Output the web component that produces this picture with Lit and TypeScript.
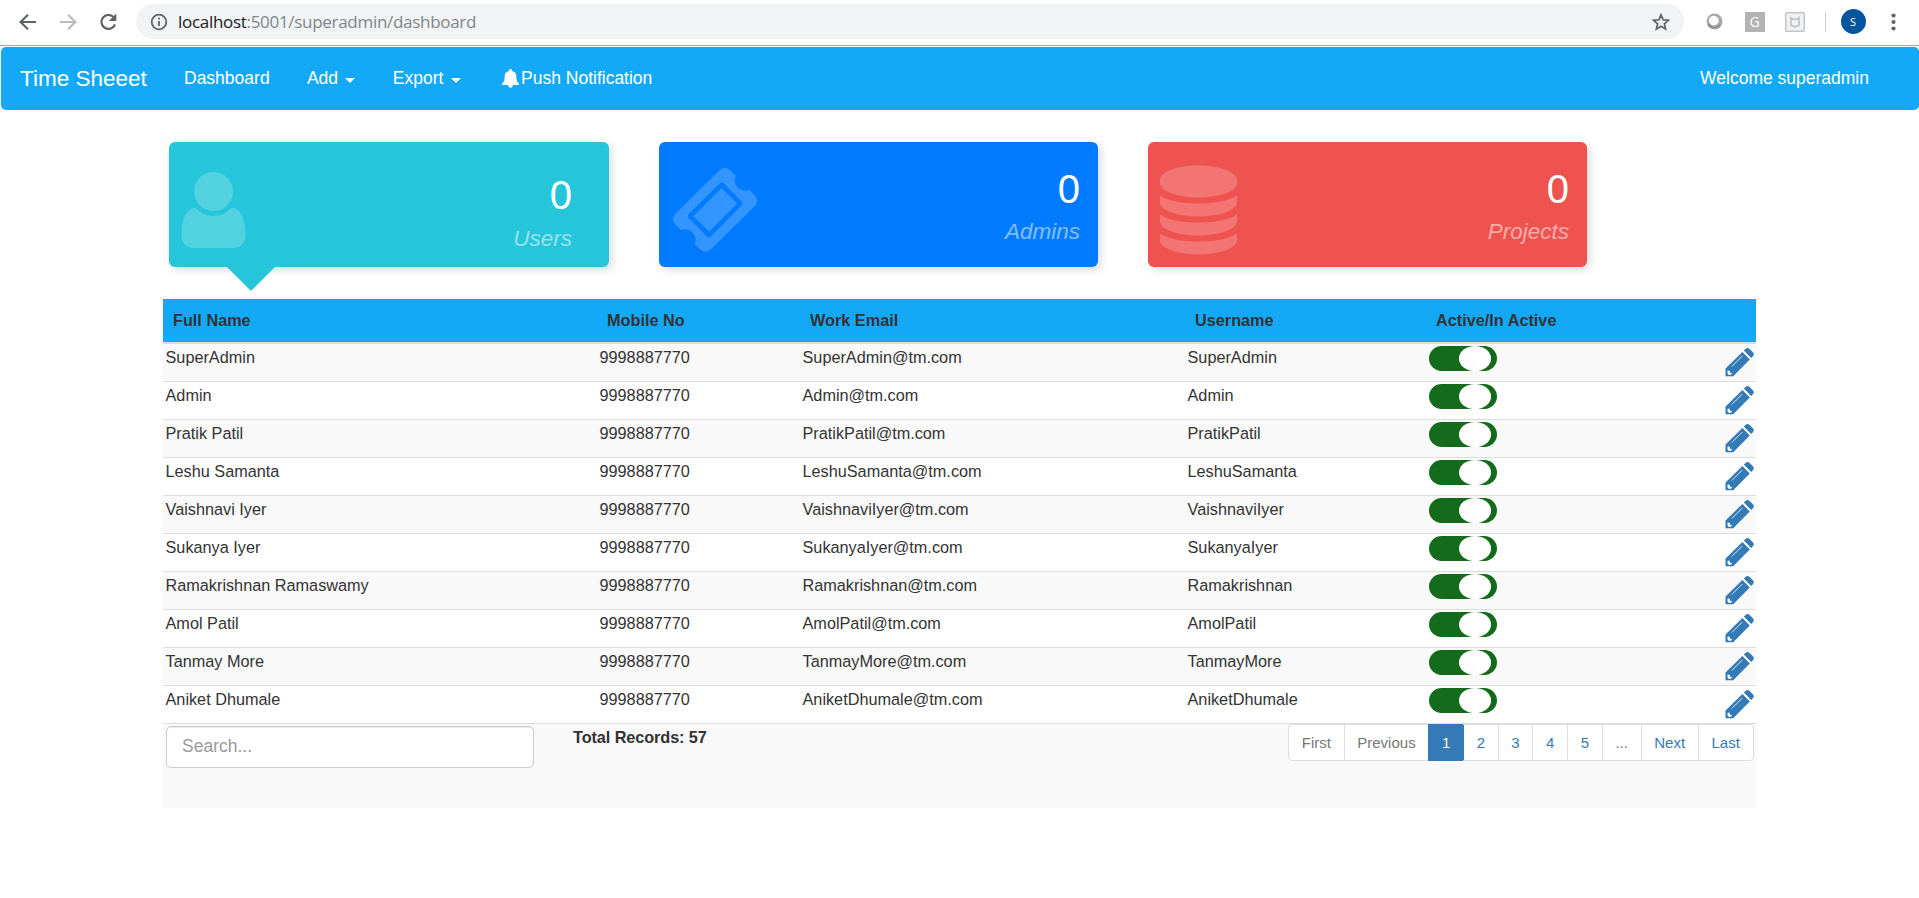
import { LitElement, html, css } from "lit";
import { customElement } from "lit/decorators.js";

const sans = css`"Liberation Sans", Arial, sans-serif`;

@customElement("browser-bar")
class BrowserBar extends LitElement {
  static styles = css`
    :host { display: flex; align-items: center; box-sizing: border-box; height: 46px; padding: 0 23.500px 2px 17px; background: #fff; border-bottom: 1px solid #a8a8a8; }
    svg { display: block; flex: none; }
    .back { margin-right: 20px; }
    .fwd { margin-right: 20px; }
    .reload { margin-right: 17px; }
    .address { display: flex; flex: 1; align-items: center; height: 35px; box-sizing: border-box; border-radius: 18px; background: #f1f3f4; padding: 0 14px; }
    .url { flex: 1; margin-left: 10px; font: 17px/35px "Open Sans", sans-serif; letter-spacing: -0.3px; color: #80868b; white-space: nowrap; }
    .host { color: #202124; }
    .ext { display: flex; align-items: center; margin-left: 22px; }
    .g { width: 20px; height: 20px; margin-left: 22px; background: #b3b3b3; color: #fff; font: 14px/19px "Open Sans", sans-serif; text-align: center; }
    .shield { margin-left: 20px; }
    .sep { width: 1px; height: 20px; margin-left: 20px; background: #c8cacc; }
    .avatar { width: 25px; height: 25px; margin-left: 15px; border-radius: 50%; background: #03559e; color: #fff; font: 11px/25px "Open Sans", sans-serif; text-align: center; }
    .more { margin-left: 25px; }
  `;
  render() {
    return html`
      <svg class="back" width="21" height="20" viewBox="0 0 21 20" fill="none" stroke="#5f6368" stroke-width="2.1"><path d="M19 10H4M11 2.7 3.5 10 11 17.3"/></svg>
      <svg class="fwd" width="21" height="20" viewBox="0 0 21 20" fill="none" stroke="#b9bbbe" stroke-width="2.1"><path d="M2 10H17M10 2.7 17.5 10 10 17.3"/></svg>
      <svg class="reload" width="20" height="20" viewBox="0 0 20 20"><path d="M16 12.300A7 7 0 1 1 14.500 5" fill="none" stroke="#5f6368" stroke-width="2.2"/><path d="M17.300 1.500V9h-7.500z" fill="#5f6368"/></svg>
      <div class="address">
        <svg width="18" height="18" viewBox="0 0 18 18"><circle cx="9" cy="9" r="7.3" fill="none" stroke="#5f6368" stroke-width="1.8"/><path d="M8.1 8h1.8v5H8.1zM8.1 4.8h1.8v1.8H8.1z" fill="#5f6368"/></svg>
        <div class="url"><span class="host">localhost</span>:5001/superadmin/dashboard</div>
        <svg width="18" height="18" viewBox="0 0 18 18"><path d="m9 1.8 2.1 5 5.3.5-4 3.5 1.2 5.3L9 13.3l-4.6 2.8 1.2-5.3-4-3.5 5.3-.5z" fill="none" stroke="#5f6368" stroke-width="1.7"/></svg>
      </div>
      <div class="ext">
        <svg width="17" height="17" viewBox="0 0 17 17"><circle cx="8.5" cy="8.5" r="8" fill="#a9a9a9"/><circle cx="7.8" cy="7.6" r="4.9" fill="#fafafa"/><path d="M2.5 11A7 7 0 0 0 14 12" fill="none" stroke="#8a8a8a" stroke-width="1.5"/></svg>
        <div class="g">G</div>
        <svg class="shield" width="20" height="20" viewBox="0 0 20 20"><rect x=".75" y=".75" width="18.5" height="18.5" rx="1" fill="#f1f2f4" stroke="#c3c5c8" stroke-width="1.5"/><path d="M6 5.800 8 7.300h4l2-1.500v7.500L10 14.700l-4-1.400z" fill="none" stroke="#c3c5c8" stroke-width="1.8"/></svg>
        <div class="sep"></div>
        <div class="avatar">S</div>
        <svg class="more" width="5" height="18" viewBox="0 0 5 18" fill="#5f6368"><circle cx="2.500" cy="2.500" r="2.100"/><circle cx="2.500" cy="9" r="2.100"/><circle cx="2.500" cy="15.500" r="2.100"/></svg>
      </div>
    `;
  }
}

@customElement("nav-bar")
class NavBar extends LitElement {
  static styles = css`
    :host { display: flex; align-items: center; box-sizing: border-box; height: 63px; margin: 1px 0 0 1px; padding: 0 50px 0 19px; border-radius: 5px; background: #13a9f7; color: #fff; font: 17.5px/25px ${sans}; white-space: nowrap; }
    .brand { width: 164px; font-size: 22.500px; }
    .item { display: flex; align-items: center; margin-right: 37.300px; }
    .caret { margin-left: 7.400px; margin-top: 3px; border: 5px solid transparent; border-top-color: #fff; border-bottom: 0; }
    .bell { margin: 0 2.500px 0 3.500px; }
    .welcome { margin-left: auto; }
  `;
  render() {
    return html`
      <div class="brand">Time Sheeet</div>
      <div class="item">Dashboard</div>
      <div class="item">Add<i class="caret"></i></div>
      <div class="item">Export<i class="caret"></i></div>
      <div class="item">
        <svg class="bell" width="17" height="19" viewBox="0 0 17 19" fill="#fff"><path d="M8.500 0C9.400 0 10 .7 10 1.500v.4c2.700.6 4.300 2.600 4.300 5.100 0 4 .5 6 2.700 7.500V16H0v-1.500C2.200 13 2.700 11 2.700 7c0-2.500 1.600-4.500 4.300-5.100v-.4C7 .7 7.600 0 8.500 0zM6.200 16h4.600v.5a2.300 2.300 0 0 1-4.600 0z"/></svg>
        Push Notification
      </div>
      <div class="welcome">Welcome superadmin</div>
    `;
  }
}

const person = html`<svg width="65" height="77" viewBox="0 0 65 77" fill="#fff"><circle cx="32.500" cy="19.500" r="19.500"/><path d="M14 35.500a24.500 24.500 0 0 0 37 0C61 37 64.500 50 64.500 63c0 8-5 13-12 13H12.500C5.500 76 .5 71 .5 63 .5 50 4 37 14 35.500z"/></svg>`;
const ticket = html`<svg width="84" height="84" viewBox="0 0 84 84"><path fill="#fff" fill-rule="evenodd" d="M46.500 2.200a7.500 7.500 0 0 1 10.600 0L62.800 8a10.300 10.300 0 0 0 13.700 13.700l5.300 5.800a7.500 7.500 0 0 1 0 10.600L37.800 81.500a7.500 7.500 0 0 1-10.600 0L21.500 76A10.300 10.300 0 0 0 8 62.300L2.200 56.500a7.500 7.500 0 0 1 0-10.600zM46.600 15.600 15.800 46.100a3 3 0 0 0 0 4.200L33.800 68.200a3 3 0 0 0 4.200 0L68.300 37.500a3 3 0 0 0 0-4.200L50.800 15.600a3 3 0 0 0-4.200 0zM48.700 20 64.200 35.500 36.300 63.800 20.400 48.200z"/></svg>`;
const database = html`<svg width="77" height="90" viewBox="0 0 77 90" fill="#fff"><path d="M0 15C0 7 17 .5 38.500.5S77 7 77 15v3C77 26 60 32.500 38.500 32.500S0 26 0 18zM0 30.500c8 5.500 22 8 38.500 8s30.500-2.500 38.500-8V37c0 8-17 14.500-38.500 14.500S0 45 0 37zM0 49.500c8 5.500 22 8 38.500 8s30.500-2.500 38.500-8V56c0 8-17 14.500-38.500 14.500S0 64 0 56zM0 68.500c8 5.500 22 8 38.500 8s30.500-2.500 38.500-8V75c0 8-17 14.500-38.500 14.500S0 83 0 75z"/></svg>`;

@customElement("stat-cards")
class StatCards extends LitElement {
  static styles = css`
    :host { display: flex; gap: 50px; margin: 32px 0 32px 169px; font-family: ${sans}; color: #fff; }
    .card { position: relative; display: flex; justify-content: space-between; box-sizing: border-box; width: 439px; height: 125px; padding: 24px 18px 0 12px; border-radius: 6px; box-shadow: 3px 3px 8px rgba(0, 0, 0, 0.14); }
    .users { width: 440px; padding-top: 30px; padding-right: 37px; background: #26c6da; }
    .users::after { content: ""; position: absolute; left: 58px; top: 124.500px; border: 24px solid transparent; border-top-color: #26c6da; border-bottom: 0; }
    .admins { background: #007bff; padding-left: 14px; }
    .projects { background: #ef5350; }
    .icon { opacity: 0.2; height: 90px; }
    .icon svg { display: block; }
    .admins .icon { padding-top: 1.500px; }
    .projects .icon { margin-top: -1.500px; }
    .text { text-align: right; }
    .num { font-size: 40px; line-height: 46px; }
    .label { margin-top: 7px; font-size: 22.500px; line-height: 26px; font-style: italic; opacity: 0.5; }
    .users .label { margin-top: 8px; }
  `;
  render() {
    const card = (cls: string, icon: unknown, label: string) => html`
      <div class="card ${cls}">
        <div class="icon">${icon}</div>
        <div class="text"><div class="num">0</div><div class="label">${label}</div></div>
      </div>`;
    return html`${card("users", person, "Users")}${card("admins", ticket, "Admins")}${card("projects", database, "Projects")}`;
  }
}

const rows: [string, string, string][] = [
  ["SuperAdmin", "SuperAdmin@tm.com", "SuperAdmin"],
  ["Admin", "Admin@tm.com", "Admin"],
  ["Pratik Patil", "PratikPatil@tm.com", "PratikPatil"],
  ["Leshu Samanta", "LeshuSamanta@tm.com", "LeshuSamanta"],
  ["Vaishnavi Iyer", "VaishnaviIyer@tm.com", "VaishnaviIyer"],
  ["Sukanya Iyer", "SukanyaIyer@tm.com", "SukanyaIyer"],
  ["Ramakrishnan Ramaswamy", "Ramakrishnan@tm.com", "Ramakrishnan"],
  ["Amol Patil", "AmolPatil@tm.com", "AmolPatil"],
  ["Tanmay More", "TanmayMore@tm.com", "TanmayMore"],
  ["Aniket Dhumale", "AniketDhumale@tm.com", "AniketDhumale"],
];

@customElement("user-table")
class UserTable extends LitElement {
  static styles = css`
    :host { display: block; width: 1593px; margin-left: 163px; color: #333; font: 16.25px/23px ${sans}; }
    .row { display: grid; grid-template-columns: 434px 203px 385px 241px 1fr; box-sizing: border-box; height: 38px; padding: 2px 2px 0 2.500px; border-bottom: 1px solid #ddd; }
    .row:nth-child(even) { background: #f9f9f9; }
    .head { height: 45px; padding: 10px 0 0 10px; background: #13a9f7; border-bottom: 2px solid #ddd; font-weight: bold; }
    .last { display: flex; justify-content: space-between; }
    .toggle { display: flex; box-sizing: border-box; width: 68px; height: 25px; padding-left: 30px; border-radius: 12.500px; background: #156b1c; }
    .knob { width: 32.500px; height: 25px; border-radius: 50%; background: #fff; }
    .pencil { margin-top: 1.500px; }
    .foot { display: flex; box-sizing: border-box; height: 84px; padding: 2px 2.500px 0 3px; background: #f9f9f9; }
    .search { box-sizing: border-box; width: 368px; height: 42px; padding: 0 15px; border: 1px solid #ccc; border-radius: 5px; background: #fff; box-shadow: inset 0 1px 1px rgba(0, 0, 0, 0.075); color: #999; font-size: 17.500px; line-height: 38px; }
    .total { margin-left: 39px; font-weight: bold; letter-spacing: -0.08px; }
    .pages { display: flex; box-sizing: border-box; height: 37px; margin: -2px 0 0 auto; border: 1px solid #ddd; border-radius: 4px; background: #fff; color: #337ab7; font-size: 15px; line-height: 36px; }
    .page { box-sizing: border-box; padding: 0 12.680px; border-left: 1px solid #ddd; }
    .page:first-child { border: 0; }
    .off { color: #777; }
    .on { margin: -1px 0; padding-top: 1px; background: #337ab7; border-color: #337ab7; color: #fff; }
    .on + .page { border-left-color: #337ab7; }
  `;
  render() {
    return html`
      <div class="row head"><div>Full Name</div><div>Mobile No</div><div>Work Email</div><div>Username</div><div>Active/In Active</div></div>
      ${rows.map(
        (r) => html`<div class="row">
          <div>${r[0]}</div><div>9998887770</div><div>${r[1]}</div><div>${r[2]}</div>
          <div class="last">
            <div class="toggle"><div class="knob"></div></div>
            <svg class="pencil" width="29" height="29" viewBox="0 0 29 29"><path fill="#337ab7" d="M17.400 4 24.800 11.400 8.200 28.200H.5V20.500zM18.800 2.600 20.600.9a3.200 3.200 0 0 1 4 0L27.900 4.200a3 3 0 0 1 0 4L26.200 10z"/><path d="M2.600 22.600l2 .2.500 2 2.200.4-1.800 1.800-1.800-.2-1.200-1.200z" fill="#fff"/><path d="M6.800 18.500 17.300 8" stroke="#d5e3f0" stroke-width="1"/></svg>
          </div>
        </div>`
      )}
      <div class="foot">
        <div class="search">Search...</div>
        <div class="total">Total Records: 57</div>
        <div class="pages">
          ${["First", "Previous", "1", "2", "3", "4", "5", "...", "Next", "Last"].map(
            (p, i) => html`<div class="page ${i < 2 || p === "..." ? "off" : ""} ${p === "1" ? "on" : ""}">${p}</div>`
          )}
        </div>
      </div>
    `;
  }
}

@customElement("app-root")
class AppRoot extends LitElement {
  static styles = css`
    :host { display: block; height: 898px; background: #fff; overflow: hidden; }
  `;
  render() {
    return html`<browser-bar></browser-bar><nav-bar></nav-bar><stat-cards></stat-cards><user-table></user-table>`;
  }
}
